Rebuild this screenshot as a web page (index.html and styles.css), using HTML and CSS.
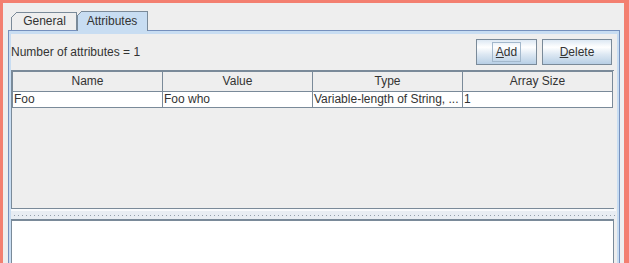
FILE: index.html
```html
<!DOCTYPE html>
<html>
<head>
<meta charset="utf-8">
<link rel="stylesheet" href="styles.css">
</head>
<body>
<div class="window">
  <div class="tabs">
    <div class="tab tab-general">General</div>
    <div class="tab tab-selected">Attributes</div>
  </div>
  <div class="panel">
    <div class="panel-body">
      <div class="topbar">
        <span class="count">Number of attributes = 1</span>
        <div class="buttons">
          <button class="btn btn-add"><span class="focus"><u>A</u>dd</span></button>
          <button class="btn btn-delete"><u>D</u>elete</button>
        </div>
      </div>
      <div class="split">
        <div class="table-pane">
          <div class="thead">
            <div class="th first">Name</div>
            <div class="th">Value</div>
            <div class="th">Type</div>
            <div class="th">Array Size</div>
          </div>
          <div class="trow">
            <div class="td first">Foo</div>
            <div class="td">Foo who</div>
            <div class="td">Variable-length of String, ...</div>
            <div class="td">1</div>
          </div>
        </div>
        <div class="divider">
          <svg class="bumps" width="100%" height="3">
            <defs>
              <pattern id="bump" x="3" width="4" height="3" patternUnits="userSpaceOnUse">
                <rect x="0" y="1" width="1" height="1" fill="#949fab"/>
              </pattern>
            </defs>
            <rect x="0" y="0" width="100%" height="3" fill="url(#bump)"/>
          </svg>
        </div>
        <div class="text-pane"></div>
      </div>
    </div>
  </div>
</div>
</body>
</html>
```

FILE: styles.css
```css
* { box-sizing: border-box; }
html, body { margin: 0; }
body {
  background: #f37f70;
  padding: 3px 5px 0 3px;
  height: 263px;
  overflow: hidden;
  font-family: "Liberation Sans", Arial, sans-serif;
  font-size: 12px;
  color: #333333;
}
.window {
  background: #eeeeee;
  height: 260px;
  padding: 8px 4px 0 5px;
  display: flex;
  flex-direction: column;
}
.tabs {
  display: flex;
  align-items: flex-end;
  height: 19px;
  padding-left: 3px;
}
.tab {
  position: relative;
  border: 1px solid #7a8a99;
  border-bottom: none;
  text-align: center;
  white-space: nowrap;
}
.tab::before {
  content: "";
  position: absolute;
  left: -1px;
  top: -1px;
  width: 6px;
  height: 6px;
  background: linear-gradient(135deg, #eeeeee 0 42%, #7a8a99 42% 58%, transparent 58%);
}
.tab-general {
  width: 66px;
  height: 18px;
  line-height: 17px;
  padding-left: 1px;
  background: #eeeeee;
}
.tab-selected {
  width: 71px;
  height: 20px;
  line-height: 18px;
  margin-bottom: -1px;
  background: #c8ddf2;
  z-index: 1;
  border-left: none;
}
.tab-selected::before {
  left: 0;
  width: 5px;
  height: 5px;
  background: linear-gradient(135deg, #eeeeee 0 42%, #7a8a99 42% 58%, transparent 58%);
}
.tab-selected::after {
  content: "";
  position: absolute;
  left: 0;
  top: 4px;
  width: 1px;
  height: 15px;
  background: #7a8a99;
}
.panel {
  flex: 1;
  background: #c8ddf2;
  border: 1px solid #7590bd;
  border-bottom: none;
  padding: 3px 2px 0 2px;
  display: flex;
  min-height: 0;
}
.panel-body {
  flex: 1;
  background: #eeeeee;
  display: flex;
  flex-direction: column;
  min-height: 0;
}
.topbar {
  height: 36px;
  display: flex;
  align-items: center;
  justify-content: space-between;
  padding: 0 5px 0 0;
}
.buttons { display: flex; gap: 5px; }
.btn {
  height: 26px;
  border: 1px solid #7a8a99;
  background: linear-gradient(to bottom, #dde8f3 0%, #ffffff 30%, #dde8f3 60%, #b8cfe5 100%);
  font-family: "Liberation Sans", Arial, sans-serif;
  font-size: 12px;
  color: #333333;
  padding: 0;
  display: flex;
  align-items: center;
  justify-content: center;
}
.btn u { text-underline-offset: 1px; }
.btn-add { width: 61px; }
.btn-delete { width: 70px; }
.focus {
  border: 1px solid #a3b8cc;
  padding: 2px 3px;
  height: 20px;
  display: flex;
  align-items: center;
}
.split {
  flex: 1;
  display: flex;
  flex-direction: column;
  margin-right: 1px;
  min-height: 0;
}
.table-pane {
  height: 139px;
  margin-right: 2px;
  border: 1px solid #7a8a99;
  border-right: none;
  background: #eeeeee;
}
.thead, .trow {
  display: grid;
  grid-template-columns: 151px 150px 150px 150px;
}
.th {
  height: 21px;
  border-top: 1px solid #7a8a99;
  border-right: 1px solid #7a8a99;
  border-bottom: 1px solid #7a8a99;
  text-align: center;
  line-height: 19px;
  background: #eeeeee;
}
.first { border-left: 1px solid #7a8a99; }
.td {
  height: 16px;
  background: #ffffff;
  border-right: 1px solid #7a8a99;
  border-bottom: 1px solid #7a8a99;
  line-height: 15px;
  padding-left: 1px;
  white-space: nowrap;
  overflow: hidden;
}
.divider {
  height: 10px;
  background: #e8edf3;
  border-top: 2px solid #f8fafc;
  padding-top: 3px;
}
.bumps { display: block; }
.text-pane {
  flex: 1;
  margin-right: 2px;
  background: #ffffff;
  border-top: 2px solid #7a8a99;
  border-left: 1px solid #7a8a99;
  border-right: 1px solid #7a8a99;
}
```
